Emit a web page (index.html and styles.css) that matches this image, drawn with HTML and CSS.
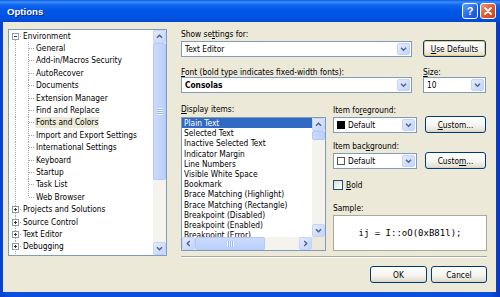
FILE: index.html
```html
<!DOCTYPE html>
<html lang="en">
<head>
    <meta charset="UTF-8">
    <title>Options</title>
    <link rel="stylesheet" href="styles.css">
</head>
<body>
    <div class="window">
        <div class="titlebar">
            <span class="title">Options</span>
            <div class="caption-btns">
                <span class="cap help">?</span>
                <span class="cap close">
                    <svg width="14" height="14" viewBox="0 0 14 14"><path d="M4 4 L10 10 M10 4 L4 10" stroke="#fff" stroke-width="1.8" stroke-linecap="round"/></svg>
                </span>
            </div>
        </div>

        <div class="frame">
            <div class="client">
                <div class="main">
                    <!-- category tree -->
                    <div class="tree">
                        <div class="tree-items">
                            <div class="node"><span class="g g-first"><span class="exp"></span></span><span class="txt">Environment</span></div>
                            <div class="node"><span class="g g-pass"></span><span class="g g-tee"></span><span class="txt">General</span></div>
                            <div class="node"><span class="g g-pass"></span><span class="g g-tee"></span><span class="txt">Add-in/Macros Security</span></div>
                            <div class="node"><span class="g g-pass"></span><span class="g g-tee"></span><span class="txt">AutoRecover</span></div>
                            <div class="node"><span class="g g-pass"></span><span class="g g-tee"></span><span class="txt">Documents</span></div>
                            <div class="node"><span class="g g-pass"></span><span class="g g-tee"></span><span class="txt">Extension Manager</span></div>
                            <div class="node"><span class="g g-pass"></span><span class="g g-tee"></span><span class="txt">Find and Replace</span></div>
                            <div class="node"><span class="g g-pass"></span><span class="g g-tee"></span><span class="txt picked">Fonts and Colors</span></div>
                            <div class="node"><span class="g g-pass"></span><span class="g g-tee"></span><span class="txt">Import and Export Settings</span></div>
                            <div class="node"><span class="g g-pass"></span><span class="g g-tee"></span><span class="txt">International Settings</span></div>
                            <div class="node"><span class="g g-pass"></span><span class="g g-tee"></span><span class="txt">Keyboard</span></div>
                            <div class="node"><span class="g g-pass"></span><span class="g g-tee"></span><span class="txt">Startup</span></div>
                            <div class="node"><span class="g g-pass"></span><span class="g g-tee"></span><span class="txt">Task List</span></div>
                            <div class="node"><span class="g g-pass"></span><span class="g g-end"></span><span class="txt">Web Browser</span></div>
                            <div class="node"><span class="g g-tee"><span class="exp plus"></span></span><span class="txt">Projects and Solutions</span></div>
                            <div class="node"><span class="g g-tee"><span class="exp plus"></span></span><span class="txt">Source Control</span></div>
                            <div class="node"><span class="g g-tee"><span class="exp plus"></span></span><span class="txt">Text Editor</span></div>
                            <div class="node"><span class="g g-tee"><span class="exp plus"></span></span><span class="txt">Debugging</span></div>
                            <div class="node"><span class="g g-tee"><span class="exp plus"></span></span><span class="txt">Database Tools</span></div>
                        </div>
                        <div class="vscroll tree-scroll">
                            <span class="sb-btn"><svg viewBox="0 0 13 13"><path d="M3.5 8 L6.5 5 L9.5 8" class="chev"/></svg></span>
                            <span class="sb-thumb"><span class="grip"></span></span>
                            <span class="sb-track"></span>
                            <span class="sb-btn"><svg viewBox="0 0 13 13"><path d="M3.5 5 L6.5 8 L9.5 5" class="chev"/></svg></span>
                        </div>
                    </div>

                    <!-- settings panel -->
                    <div class="panel">
                        <div class="lbl">Show se<u>t</u>tings for:</div>
                        <div class="row top-row">
                            <div class="combo wide"><span class="val">Text Editor</span><span class="dd"><svg viewBox="0 0 13 12"><path d="M3.5 4.5 L6.5 7.5 L9.5 4.5" class="chev"/></svg></span></div>
                            <div class="btn defaults"><span><u>U</u>se Defaults</span></div>
                        </div>
                        <div class="row label-row">
                            <div class="lbl wide"><u>F</u>ont (bold type indicates fixed-width fonts):</div>
                            <div class="lbl"><u>S</u>ize:</div>
                        </div>
                        <div class="row">
                            <div class="combo wide"><span class="val bold">Consolas</span><span class="dd"><svg viewBox="0 0 13 12"><path d="M3.5 4.5 L6.5 7.5 L9.5 4.5" class="chev"/></svg></span></div>
                            <div class="combo size"><span class="val">10</span><span class="dd"><svg viewBox="0 0 13 12"><path d="M3.5 4.5 L6.5 7.5 L9.5 4.5" class="chev"/></svg></span></div>
                        </div>

                        <div class="lower">
                            <div class="col-items">
                                <div class="lbl"><u>D</u>isplay items:</div>
                                <div class="listbox">
                                    <div class="list-items">
                                        <div class="item sel">Plain Text</div>
                                        <div class="item">Selected Text</div>
                                        <div class="item">Inactive Selected Text</div>
                                        <div class="item">Indicator Margin</div>
                                        <div class="item">Line Numbers</div>
                                        <div class="item">Visible White Space</div>
                                        <div class="item">Bookmark</div>
                                        <div class="item">Brace Matching (Highlight)</div>
                                        <div class="item">Brace Matching (Rectangle)</div>
                                        <div class="item">Breakpoint (Disabled)</div>
                                        <div class="item">Breakpoint (Enabled)</div>
                                        <div class="item">Breakpoint (Error)</div>
                                    </div>
                                    <div class="vscroll">
                                        <span class="sb-btn"><svg viewBox="0 0 13 13"><path d="M3.5 8 L6.5 5 L9.5 8" class="chev"/></svg></span>
                                        <span class="sb-thumb small"></span>
                                        <span class="sb-track"></span>
                                        <span class="sb-btn"><svg viewBox="0 0 13 13"><path d="M3.5 5 L6.5 8 L9.5 5" class="chev"/></svg></span>
                                    </div>
                                    <div class="hscroll">
                                        <span class="sb-btn"><svg viewBox="0 0 13 13"><path d="M8 3.5 L5 6.5 L8 9.5" class="chev"/></svg></span>
                                        <span class="sb-thumb wide-thumb"><span class="grip h"></span></span>
                                        <span class="sb-track"></span>
                                        <span class="sb-btn"><svg viewBox="0 0 13 13"><path d="M5 3.5 L8 6.5 L5 9.5" class="chev"/></svg></span>
                                    </div>
                                    <div class="corner"></div>
                                </div>
                            </div>

                            <div class="col-colors">
                                <div class="lbl first">Item fo<u>r</u>eground:</div>
                                <div class="row color-row">
                                    <div class="combo color"><span class="swatch black"></span><span class="val">Default</span><span class="dd"><svg viewBox="0 0 13 12"><path d="M3.5 4.5 L6.5 7.5 L9.5 4.5" class="chev"/></svg></span></div>
                                    <div class="btn custom"><span><u>C</u>ustom...</span></div>
                                </div>
                                <div class="lbl gap">Item bac<u>k</u>ground:</div>
                                <div class="row color-row">
                                    <div class="combo color"><span class="swatch white"></span><span class="val">Default</span><span class="dd"><svg viewBox="0 0 13 12"><path d="M3.5 4.5 L6.5 7.5 L9.5 4.5" class="chev"/></svg></span></div>
                                    <div class="btn custom"><span>Custo<u>m</u>...</span></div>
                                </div>
                                <div class="check-row">
                                    <span class="checkbox"></span><span><u>B</u>old</span>
                                </div>
                                <div class="lbl sample-lbl">Sample:</div>
                                <div class="sample"><span>ij = I::oO(0xB81l);</span></div>
                            </div>
                        </div>
                        <div class="separator"></div>
                    </div>
                </div>

                <div class="footer">
                    <div class="btn ok"><span>OK</span></div>
                    <div class="btn cancel"><span>Cancel</span></div>
                </div>
            </div>
        </div>
    </div>
</body>
</html>
```

FILE: styles.css
```css
* {
    margin: 0;
    padding: 0;
    box-sizing: border-box;
}

:root {
    --dv: repeating-linear-gradient(to bottom, #a4a4a4 0 1px, transparent 1px 2px);
    --dh: repeating-linear-gradient(to right, #a4a4a4 0 1px, transparent 1px 2px);
}

body {
    width: 500px;
    height: 297px;
    overflow: hidden;
    font-family: "DejaVu Sans Condensed", "Liberation Sans", sans-serif;
    font-size: 8.3px;
    color: #000;
    background: #0b4fe0;
}

u {
    text-decoration: underline;
    text-underline-offset: 1px;
}

.window {
    width: 500px;
    height: 297px;
    display: flex;
    flex-direction: column;
}

/* title bar */
.titlebar {
    height: 22px;
    flex: none;
    display: flex;
    align-items: center;
    padding: 0 4px 0 7px;
    background: linear-gradient(to bottom, #0a5ae6 0%, #3d8ff9 9%, #1566ef 22%, #0057e6 45%, #0053e2 80%, #0048d0 100%);
}

.title {
    font-family: "Liberation Sans", sans-serif;
    font-weight: bold;
    font-size: 9.6px;
    color: #fff;
    text-shadow: 1px 1px 0 #0a2a8a;
}

.caption-btns {
    margin-left: auto;
    display: flex;
    gap: 2px;
}

.cap {
    width: 16px;
    height: 16px;
    border: 1px solid #fff;
    border-radius: 3px;
    display: flex;
    align-items: center;
    justify-content: center;
}

.cap.help {
    background: linear-gradient(to bottom right, #5c9cfb, #2563ea 60%, #1a52d8);
    color: #fff;
    font-family: "Liberation Sans", sans-serif;
    font-weight: bold;
    font-size: 11px;
}

.cap.close {
    background: linear-gradient(to bottom right, #f09a80, #e2582f 50%, #c8431c);
}

.cap svg {
    width: 14px;
    height: 14px;
}

/* window frame + client area */
.frame {
    flex: 1;
    padding: 0 4px 5px 3px;
    background: linear-gradient(to right, #0840cf, #0b4fe0 2%, #0b4fe0 98%, #0836c0);
    display: flex;
}

.client {
    flex: 1;
    background: #ece9d8;
    padding: 7px 9px 0 5px;
    display: flex;
    flex-direction: column;
}

.main {
    display: flex;
    align-items: flex-start;
    gap: 14px;
}

/* tree */
.tree {
    width: 159px;
    height: 227px;
    flex: none;
    border: 1px solid #7f9db9;
    background: #fff;
    display: flex;
}

.tree-items {
    flex: 1;
    overflow: hidden;
}

.node {
    height: 12.4px;
    display: flex;
    align-items: center;
    white-space: nowrap;
}

.g {
    width: 13px;
    height: 100%;
    flex: none;
    display: flex;
    align-items: center;
    justify-content: center;
    background-repeat: no-repeat;
}

.g-first {
    background-image: var(--dv), var(--dh);
    background-size: 1px 50%, 6px 1px;
    background-position: 6px 100%, 7px 50%;
}

.g-pass {
    background-image: var(--dv);
    background-size: 1px 100%;
    background-position: 6px 0;
}

.g-tee {
    background-image: var(--dv), var(--dh);
    background-size: 1px 100%, 6px 1px;
    background-position: 6px 0, 7px 50%;
}

.g-end {
    background-image: var(--dv), var(--dh);
    background-size: 1px 50%, 6px 1px;
    background-position: 6px 0, 7px 50%;
}

.exp {
    width: 7px;
    height: 7px;
    border: 1px solid #8c9bb0;
    background: linear-gradient(#333, #333) center / 3px 1px no-repeat, #fff;
}

.exp.plus {
    background: linear-gradient(#333, #333) center / 3px 1px no-repeat,
                linear-gradient(#333, #333) center / 1px 3px no-repeat, #fff;
}

.txt {
    padding: 0 1px;
    line-height: 11px;
}

.txt.picked {
    background: #ece9d8;
}

/* scrollbars */
.vscroll {
    width: 13px;
    flex: none;
    display: flex;
    flex-direction: column;
    background: #f4f3ee;
}

.hscroll {
    display: flex;
    background: #f4f3ee;
}

.sb-btn {
    width: 13px;
    height: 13px;
    flex: none;
    border: 1px solid #c3d3fd;
    border-radius: 2px;
    background: linear-gradient(to bottom right, #e3ebfe, #c2d4fc);
}

.sb-btn svg {
    display: block;
    width: 11px;
    height: 11px;
}

.chev {
    fill: none;
    stroke: #4d6185;
    stroke-width: 1.6;
}

.sb-thumb {
    flex: none;
    border: 1px solid #b4c8f6;
    border-radius: 2px;
    background: linear-gradient(to right, #cbdafd, #bcd0fb);
    display: flex;
    align-items: center;
    justify-content: center;
}

.tree-scroll .sb-thumb {
    height: 137px;
}

.sb-thumb.small {
    height: 9px;
}

.sb-thumb.wide-thumb {
    width: 70px;
    background: linear-gradient(to bottom, #cbdafd, #bcd0fb);
}

.sb-track {
    flex: 1;
}

.grip {
    width: 6px;
    height: 7px;
    background: repeating-linear-gradient(to bottom, #eef3fe 0 1px, #9ab7f5 1px 2px);
}

.grip.h {
    width: 7px;
    height: 6px;
    background: repeating-linear-gradient(to right, #eef3fe 0 1px, #9ab7f5 1px 2px);
}

/* settings panel */
.panel {
    width: 306px;
    display: flex;
    flex-direction: column;
}

.lbl {
    height: 10px;
    line-height: 10px;
    white-space: nowrap;
}

.row {
    display: flex;
    align-items: center;
    gap: 11px;
}

.top-row {
    height: 17px;
    margin-top: 1px;
}

.label-row {
    margin-top: 10px;
}

.label-row .lbl.wide {
    width: 231px;
}

.combo {
    height: 16px;
    border: 1px solid #7f9db9;
    background: #fff;
    display: flex;
    align-items: center;
    flex: none;
}

.combo.wide {
    width: 231px;
}

.combo.size {
    width: 63px;
}

.combo.color {
    width: 84px;
}

.val {
    flex: 1;
    padding-left: 3px;
    white-space: nowrap;
}

.val.bold {
    font-weight: bold;
}

.dd {
    width: 13px;
    height: 12px;
    margin-right: 1px;
    border: 1px solid #c3d3fd;
    border-radius: 2px;
    background: linear-gradient(to bottom right, #e3ebfe, #c2d4fc);
}

.dd svg {
    display: block;
    width: 11px;
    height: 10px;
}

.btn {
    height: 17px;
    border: 1px solid #003c74;
    border-radius: 3px;
    background: linear-gradient(to bottom, #ffffff, #f5f4ef 55%, #e6e3d6 88%, #d6d0c5);
    display: flex;
    align-items: center;
    justify-content: center;
    flex: none;
    white-space: nowrap;
}

.btn.defaults {
    width: 63px;
    box-shadow: inset 0 0 0 1px #f6c86a;
}

.btn.custom {
    width: 61px;
}

/* lower section */
.lower {
    display: flex;
    gap: 7px;
    margin-top: 11px;
}

.col-items {
    width: 145px;
}

.listbox {
    margin-top: 3px;
    height: 134px;
    border: 1px solid #7f9db9;
    background: #fff;
    display: grid;
    grid-template-columns: 1fr 13px;
    grid-template-rows: 1fr 13px;
}

.list-items {
    overflow: hidden;
}

.item {
    height: 10.2px;
    line-height: 10.2px;
    padding-left: 2px;
    white-space: nowrap;
}

.item.sel {
    background: #316ac5;
    color: #fff;
}

.listbox .vscroll {
    width: auto;
}

.corner {
    background: #ece9d8;
}

.col-colors {
    width: 154px;
    display: flex;
    flex-direction: column;
}

.lbl.first {
    margin-top: 1px;
}

.lbl.gap {
    margin-top: 8px;
}

.color-row {
    gap: 8px;
    height: 17px;
    margin-top: 1px;
}

.swatch {
    width: 8px;
    height: 8px;
    margin-left: 3px;
    flex: none;
    border: 1px solid #000;
}

.swatch.black {
    background: #000;
}

.swatch.white {
    background: #fff;
    border-color: #555;
}

.check-row {
    margin-top: 10px;
    height: 11px;
    display: flex;
    align-items: center;
    gap: 3px;
}

.checkbox {
    width: 10px;
    height: 10px;
    border: 1px solid #1c5180;
    background: linear-gradient(to bottom right, #dcdcd6, #fff);
}

.sample-lbl {
    margin-top: 13px;
}

.sample {
    margin-top: 2px;
    height: 36px;
    border: 1px solid #aca899;
    background: #fff;
    display: flex;
    align-items: center;
    justify-content: center;
    font-family: "DejaVu Sans Mono", "Liberation Mono", monospace;
    font-size: 9px;
    white-space: pre;
}

.separator {
    margin-top: 5px;
    height: 2px;
    border-top: 1px solid #aca899;
    border-bottom: 1px solid #fff;
}

/* footer */
.footer {
    display: flex;
    justify-content: flex-end;
    gap: 4px;
    padding-top: 8px;
}

.btn.ok {
    width: 57px;
}

.btn.cancel {
    width: 56px;
}
```
